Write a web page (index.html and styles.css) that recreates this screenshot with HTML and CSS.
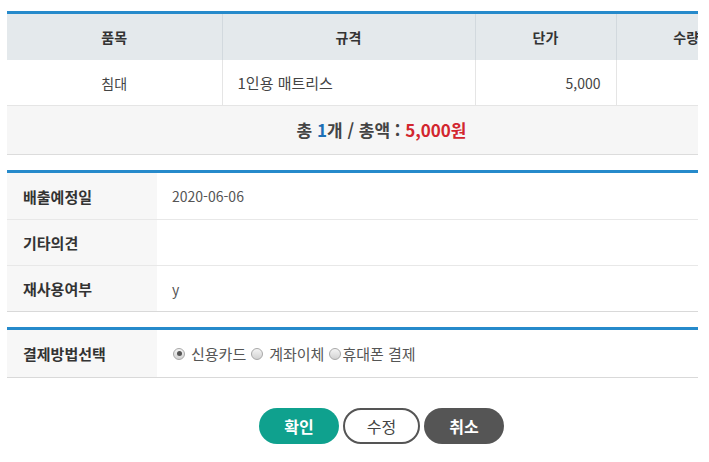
FILE: index.html
```html
<!DOCTYPE html>
<html lang="ko">
<head>
<meta charset="utf-8">
<link rel="stylesheet" href="styles.css">
</head>
<body>
<div class="viewport">
<div class="page">
  <div class="box">
    <table class="items">
      <colgroup>
        <col class="c1"><col class="c2"><col class="c3"><col class="c4">
      </colgroup>
      <thead>
        <tr><th>품목</th><th>규격</th><th>단가</th><th>수량</th></tr>
      </thead>
      <tbody>
        <tr><td class="center">침대</td><td class="left">1인용 매트리스</td><td class="right">5,000</td><td class="center"></td></tr>
      </tbody>
    </table>
    <div class="summary">총 <span class="blue">1</span>개 / 총액 : <span class="red">5,000원</span></div>
  </div>

  <div class="box form">
    <div class="row first"><div class="label">배출예정일</div><div class="value">2020-06-06</div></div>
    <div class="row"><div class="label">기타의견</div><div class="value"></div></div>
    <div class="row last"><div class="label">재사용여부</div><div class="value">y</div></div>
  </div>

  <div class="box form">
    <div class="row pay last"><div class="label">결제방법선택</div>
      <div class="value radios">
        <label class="radio"><span class="dot on"></span>신용카드</label>
        <label class="radio"><span class="dot"></span>계좌이체</label>
        <label class="radio tight"><span class="dot"></span>휴대폰 결제</label>
      </div>
    </div>
  </div>

  <div class="buttons">
    <button class="btn ok">확인</button>
    <button class="btn edit">수정</button>
    <button class="btn cancel">취소</button>
  </div>
</div>
</div>
</body>
</html>
```

FILE: styles.css
```css
html, body { margin: 0; padding: 0; background: #fff; }
body {
  font-family: "Noto Sans CJK KR", "Noto Sans", sans-serif;
  font-size: 14px;
  color: #333;
}
.viewport {
  margin: 11px 11px 0 7px;
  overflow: hidden;
  padding-bottom: 16px;
}
.page { width: 749px; }
.box {
  border-top: 3px solid #268acb;
  margin-bottom: 15px;
}
.items {
  border-collapse: collapse;
  table-layout: fixed;
  width: 749px;
}
.items .c1 { width: 215px; }
.items .c2 { width: 253px; }
.items .c3 { width: 141px; }
.items .c4 { width: 140px; }
.items th {
  background: #e4e9ec;
  height: 46px;
  padding: 0;
  font-weight: 700;
  font-size: 14px;
  color: #333;
  border-left: 1px solid #d2d9de;
  text-align: center;
}
.items td {
  height: 45px;
  padding: 0 15px;
  border-left: 1px solid #e5e5e5;
  border-bottom: 1px solid #e5e5e5;
  color: #444;
}
.items td.left { font-size: 15px; }
.items th:first-child, .items td:first-child { border-left: none; }
.center { text-align: center; }
.left { text-align: left; }
.right { text-align: right; }
.summary {
  background: #f6f6f6;
  height: 48px;
  line-height: 48px;
  text-align: center;
  font-size: 17px;
  font-weight: 700;
  color: #444;
  border-bottom: 1px solid #dcdcdc;
}
.blue { color: #1c6fb5; }
.red { color: #d2262e; }
.form .row {
  display: flex;
  height: 45px;
  border-bottom: 1px solid #e8e8e8;
}
.form .row.first { height: 46px; }
.form .row.last { border-bottom-color: #d9d9d9; }
.form .row.pay { height: 47px; }
.label {
  width: 150px;
  flex: none;
  background: #f7f7f7;
  padding-left: 16px;
  box-sizing: border-box;
  display: flex;
  align-items: center;
  font-weight: 700;
  font-size: 15px;
  color: #333;
}
.value {
  flex: 1;
  padding-left: 15px;
  display: flex;
  align-items: center;
  color: #555;
}
.radios { gap: 5px; padding-left: 16px; font-size: 15px; }
.radio { display: flex; align-items: center; gap: 6px; color: #555; }
.radio.tight { gap: 1px; }
.dot {
  width: 12px;
  height: 12px;
  border-radius: 50%;
  border: 1px solid #a8a8a8;
  background: linear-gradient(#f4f4f4, #d2d2d2);
  position: relative;
  box-sizing: border-box;
  display: inline-block;
}
.dot.on::after {
  content: "";
  position: absolute;
  left: 2.5px;
  top: 2.5px;
  width: 5px;
  height: 5px;
  border-radius: 50%;
  background: #555;
}
.buttons {
  display: flex;
  justify-content: center;
  gap: 4px;
  margin-top: 30px;
}
.btn {
  height: 36px;
  width: 80px;
  border-radius: 18px;
  font-family: inherit;
  font-size: 16px;
  font-weight: 700;
  border: none;
  padding: 0;
  cursor: pointer;
}
.btn.ok { background: #0fa18e; color: #fff; }
.btn.edit { background: #fff; border: 2px solid #555; color: #444; width: 77px; font-weight: 400; }
.btn.cancel { background: #555; color: #fff; }
```
